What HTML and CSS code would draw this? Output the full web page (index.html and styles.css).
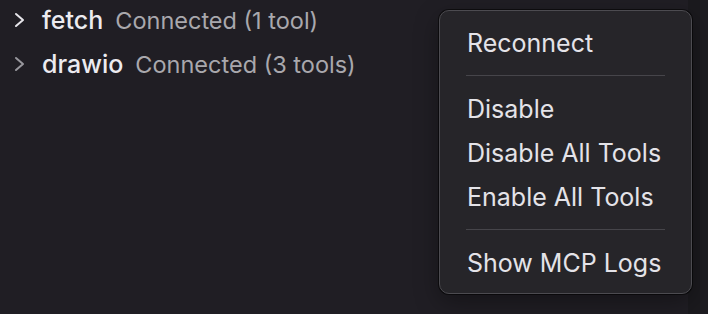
FILE: index.html
```html
<!DOCTYPE html>
<html lang="en">
<head>
    <meta charset="UTF-8">
    <meta name="viewport" content="width=device-width, initial-scale=1.0">
    <title>MCP Servers</title>
    <link rel="stylesheet" href="styles.css">
</head>
<body>
    <div class="panel">
        <ul class="server-list">
            <li class="server-row">
                <svg class="chevron" width="12" height="16" viewBox="0 0 12 16">
                    <polyline points="2,2 9,8 2,14" fill="none" stroke="currentColor" stroke-width="2" stroke-linecap="round" stroke-linejoin="round"/>
                </svg>
                <span class="server-name">fetch</span>
                <span class="server-status">Connected (1 tool)</span>
            </li>
            <li class="server-row muted">
                <svg class="chevron" width="12" height="16" viewBox="0 0 12 16">
                    <polyline points="2,2 9,8 2,14" fill="none" stroke="currentColor" stroke-width="2" stroke-linecap="round" stroke-linejoin="round"/>
                </svg>
                <span class="server-name">drawio</span>
                <span class="server-status">Connected (3 tools)</span>
            </li>
        </ul>
        <div class="scroll-track"></div>
    </div>

    <!-- Context menu -->
    <div class="context-menu">
        <div class="menu-item">Reconnect</div>
        <div class="menu-sep"></div>
        <div class="menu-item">Disable</div>
        <div class="menu-item">Disable All Tools</div>
        <div class="menu-item">Enable All Tools</div>
        <div class="menu-sep"></div>
        <div class="menu-item">Show MCP Logs</div>
    </div>
</body>
</html>
```

FILE: styles.css
```css
:root {
    --bg-primary: #201e24;
    --bg-menu: #262529;
    --border-menu: #4c4b50;
    --text-primary: #ecebf0;
    --text-secondary: #a9a8ad;
    --text-menu: #e4e3e8;
}

html, body {
    height: 100%;
}

body {
    margin: 0;
    background: var(--bg-primary);
    font-family: 'Inter', 'Liberation Sans', sans-serif;
    color: var(--text-primary);
    overflow: hidden;
}

.panel {
    display: flex;
    height: 100%;
}

.server-list {
    flex: 1;
    list-style: none;
    margin: 0;
    padding: 0;
}

.server-row {
    display: flex;
    align-items: baseline;
    height: 44px;
    line-height: 40px;
}

.chevron {
    flex: none;
    margin: 0 16px 0 14px;
    color: #e6e5ea;
    align-self: center;
    position: relative;
    top: -2px;
}

.muted .chevron {
    color: #98979d;
}

.server-name {
    font-size: 25px;
    font-weight: 500;
    margin-right: 12px;
}

.server-status {
    font-size: 23.5px;
    color: var(--text-secondary);
}

.scroll-track {
    width: 20px;
    flex: none;
    background: linear-gradient(to right, #1b1a1e 0, #1b1a1e 12px, #1e1d22 12px);
}

.context-menu {
    position: absolute;
    left: 439px;
    top: 10px;
    width: 253px;
    box-sizing: border-box;
    padding: 10px 0 8px;
    background: var(--bg-menu);
    border: 1px solid var(--border-menu);
    border-radius: 10px;
    box-shadow: 0 0 0 1px rgba(0, 0, 0, 0.55), 0 8px 24px rgba(0, 0, 0, 0.35);
}

.menu-item {
    height: 44px;
    line-height: 44px;
    padding: 0 27px;
    font-size: 25px;
    color: var(--text-menu);
    white-space: nowrap;
}

.menu-sep {
    height: 1px;
    background: #46454a;
    margin: 10px 26px 11px;
}
```
